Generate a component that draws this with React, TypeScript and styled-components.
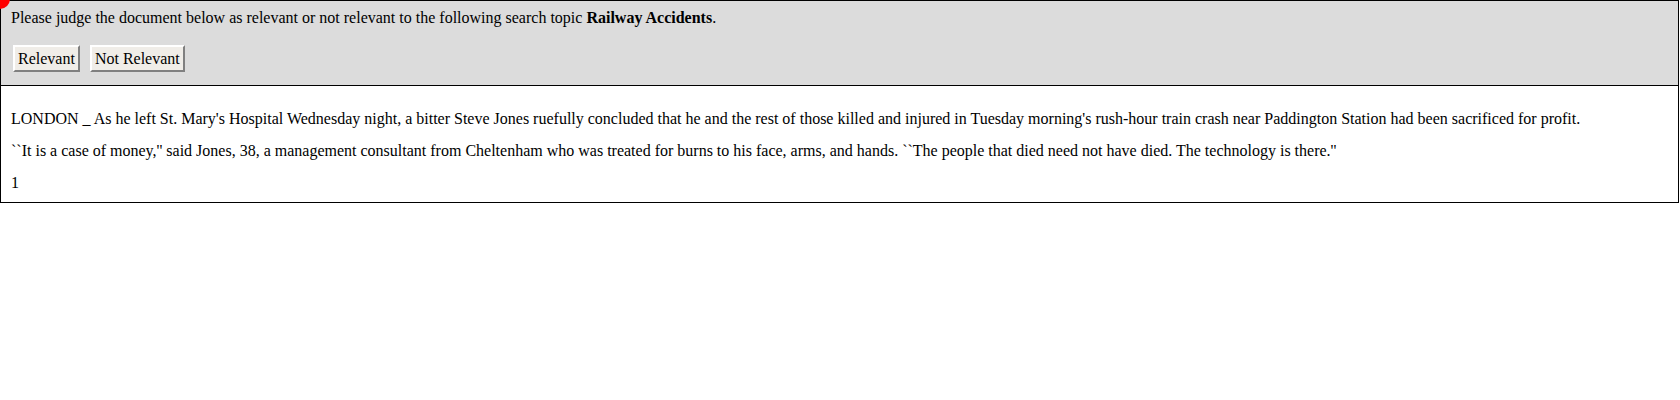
import React from 'react';
import styled, {createGlobalStyle} from 'styled-components';

const GlobalStyle = createGlobalStyle`
  html, body {
    margin: 0;
    padding: 0;
    background: #ffffff;
  }
  body {
    font-family: "Liberation Serif", "Times New Roman", serif;
    font-size: 16px;
    color: #000000;
  }
`;

const Frame = styled.div`
  position: relative;
  width: 1679px;
  border: 1px solid #000000;
  box-sizing: border-box;
`;

// red corner dot sitting over the top-left corner of the frame
const Marker = styled.span`
  position: absolute;
  left: -11px;
  top: -12px;
  width: 20px;
  height: 20px;
  border-radius: 50%;
  background: #ff0000;
`;

const Prompt = styled.div`
  background: #dcdcdc;
  border-bottom: 1px solid #000000;
  padding: 8px 10px 13px;
`;

const Question = styled.div`
  line-height: 18px;
`;

const Actions = styled.div`
  display: flex;
  gap: 10px;
  margin-top: 18px;
  padding-left: 2px;
`;

const JudgeButton = styled.button`
  font-family: "Liberation Serif", "Times New Roman", serif;
  font-size: 16px;
  line-height: 19px;
  color: #000000;
  background: #f0ede8;
  padding: 2px 3px;
  border: 2px solid;
  border-color: #ffffff #808080 #808080 #ffffff;
  border-radius: 0;
  cursor: pointer;
`;

const Doc = styled.div`
  padding: 24px 10px 10px;
`;

const Para = styled.p`
  margin: 0 0 14px;
  line-height: 18px;

  &:last-child {
    margin-bottom: 0;
  }
`;

export default function App() {
  return (
    <>
      <GlobalStyle />
      <Frame>
        <Marker />
        <Prompt>
          <Question>
            Please judge the document below as relevant or not relevant to the
            following search topic <b>Railway Accidents</b>.
          </Question>
          <Actions>
            <JudgeButton type="button">Relevant</JudgeButton>
            <JudgeButton type="button">Not Relevant</JudgeButton>
          </Actions>
        </Prompt>
        <Doc>
          <Para>
            LONDON _ As he left St. Mary's Hospital Wednesday night, a bitter
            Steve Jones ruefully concluded that he and the rest of those killed
            and injured in Tuesday morning's rush-hour train crash near
            Paddington Station had been sacrificed for profit.
          </Para>
          <Para>
            ``It is a case of money,'' said Jones, 38, a management consultant
            from Cheltenham who was treated for burns to his face, arms, and
            hands. ``The people that died need not have died. The technology is
            there.''
          </Para>
          <Para>1</Para>
        </Doc>
      </Frame>
    </>
  );
}
